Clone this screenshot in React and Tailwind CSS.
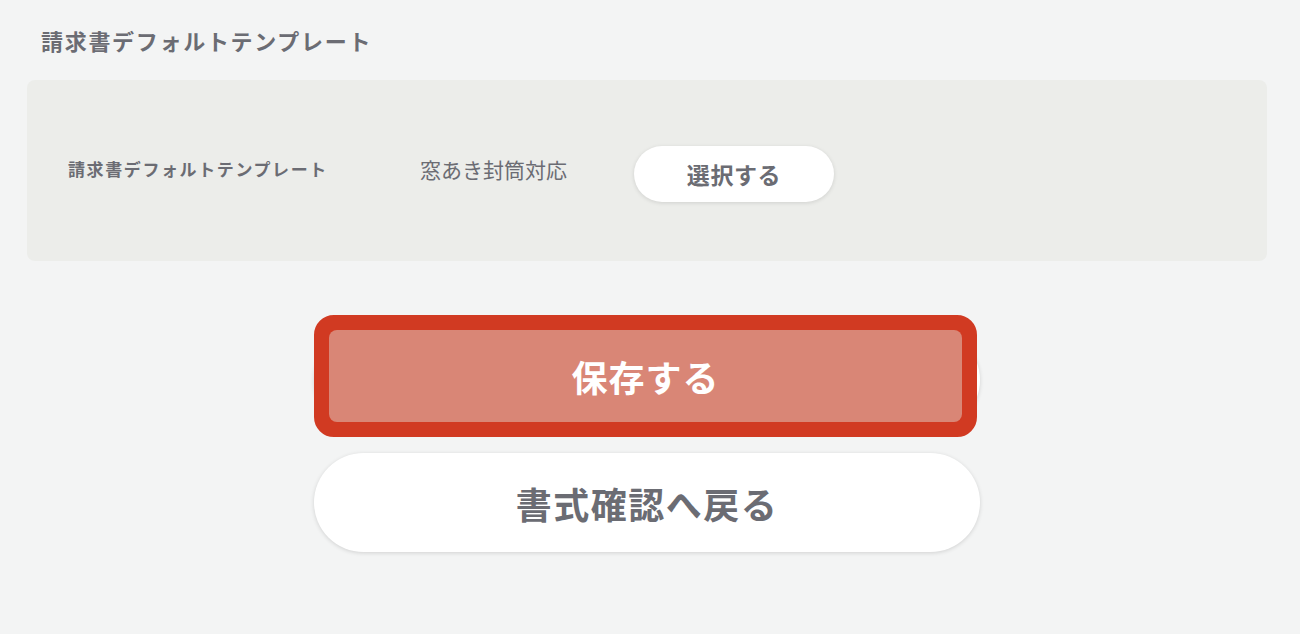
import React from "react";

// Invoice template settings — default template row and save / back actions.
const FONT = "font-['Noto_Sans_CJK_JP','Noto_Sans',sans-serif]";

export default function App() {
  return (
    <div
      className={`${FONT} min-h-[634px] w-full bg-[#f3f4f4] pl-[27px] pr-[33px] pt-[26px] text-[#6b6c73]`}
    >
      <h2 className="pl-[14px] text-[22px] font-bold leading-[28px] tracking-[1.7px]">
        請求書デフォルトテンプレート
      </h2>

      {/* Default template card */}
      <div className="mt-[26px] h-[181px] rounded-[8px] bg-[#ecedea] pl-[41px] pt-[66px]">
        <div className="flex items-start">
          <div className="w-[352px] pt-[11px] text-[17px] font-bold leading-[24px] tracking-[1.6px]">
            請求書デフォルトテンプレート
          </div>
          <div className="w-[214px] pt-[9px] text-[21px] leading-[28px]">
            窓あき封筒対応
          </div>
          <button className="flex h-[56px] w-[200px] items-center justify-center rounded-full bg-white text-[23px] font-bold tracking-[0.6px] text-[#6b6c73] shadow-[0_1px_4px_rgba(0,0,0,0.12)]">
            選択する
          </button>
        </div>
      </div>

      {/* Actions */}
      <div className="mx-auto mt-[69px] flex w-[666px] flex-col gap-[23px]">
        <div className="relative h-[100px]">
          <button className="h-full w-full rounded-full bg-white shadow-[0_1px_4px_rgba(0,0,0,0.14)]" />
          <div className="absolute left-0 top-[-15px] flex h-[122px] w-[663px] rounded-[20px] border-[15px] border-[#d13a22] bg-[#d13a22]">
            <div className="flex flex-1 items-center justify-center rounded-[8px] bg-[#d98676] text-[36px] font-bold tracking-[1px] text-white">
              保存する
            </div>
          </div>
        </div>
        <button className="flex h-[99px] w-full items-center justify-center rounded-full bg-white text-[36px] font-bold tracking-[1.5px] text-[#6b6c73] shadow-[0_1px_4px_rgba(0,0,0,0.14)]">
          書式確認へ戻る
        </button>
      </div>
    </div>
  );
}
